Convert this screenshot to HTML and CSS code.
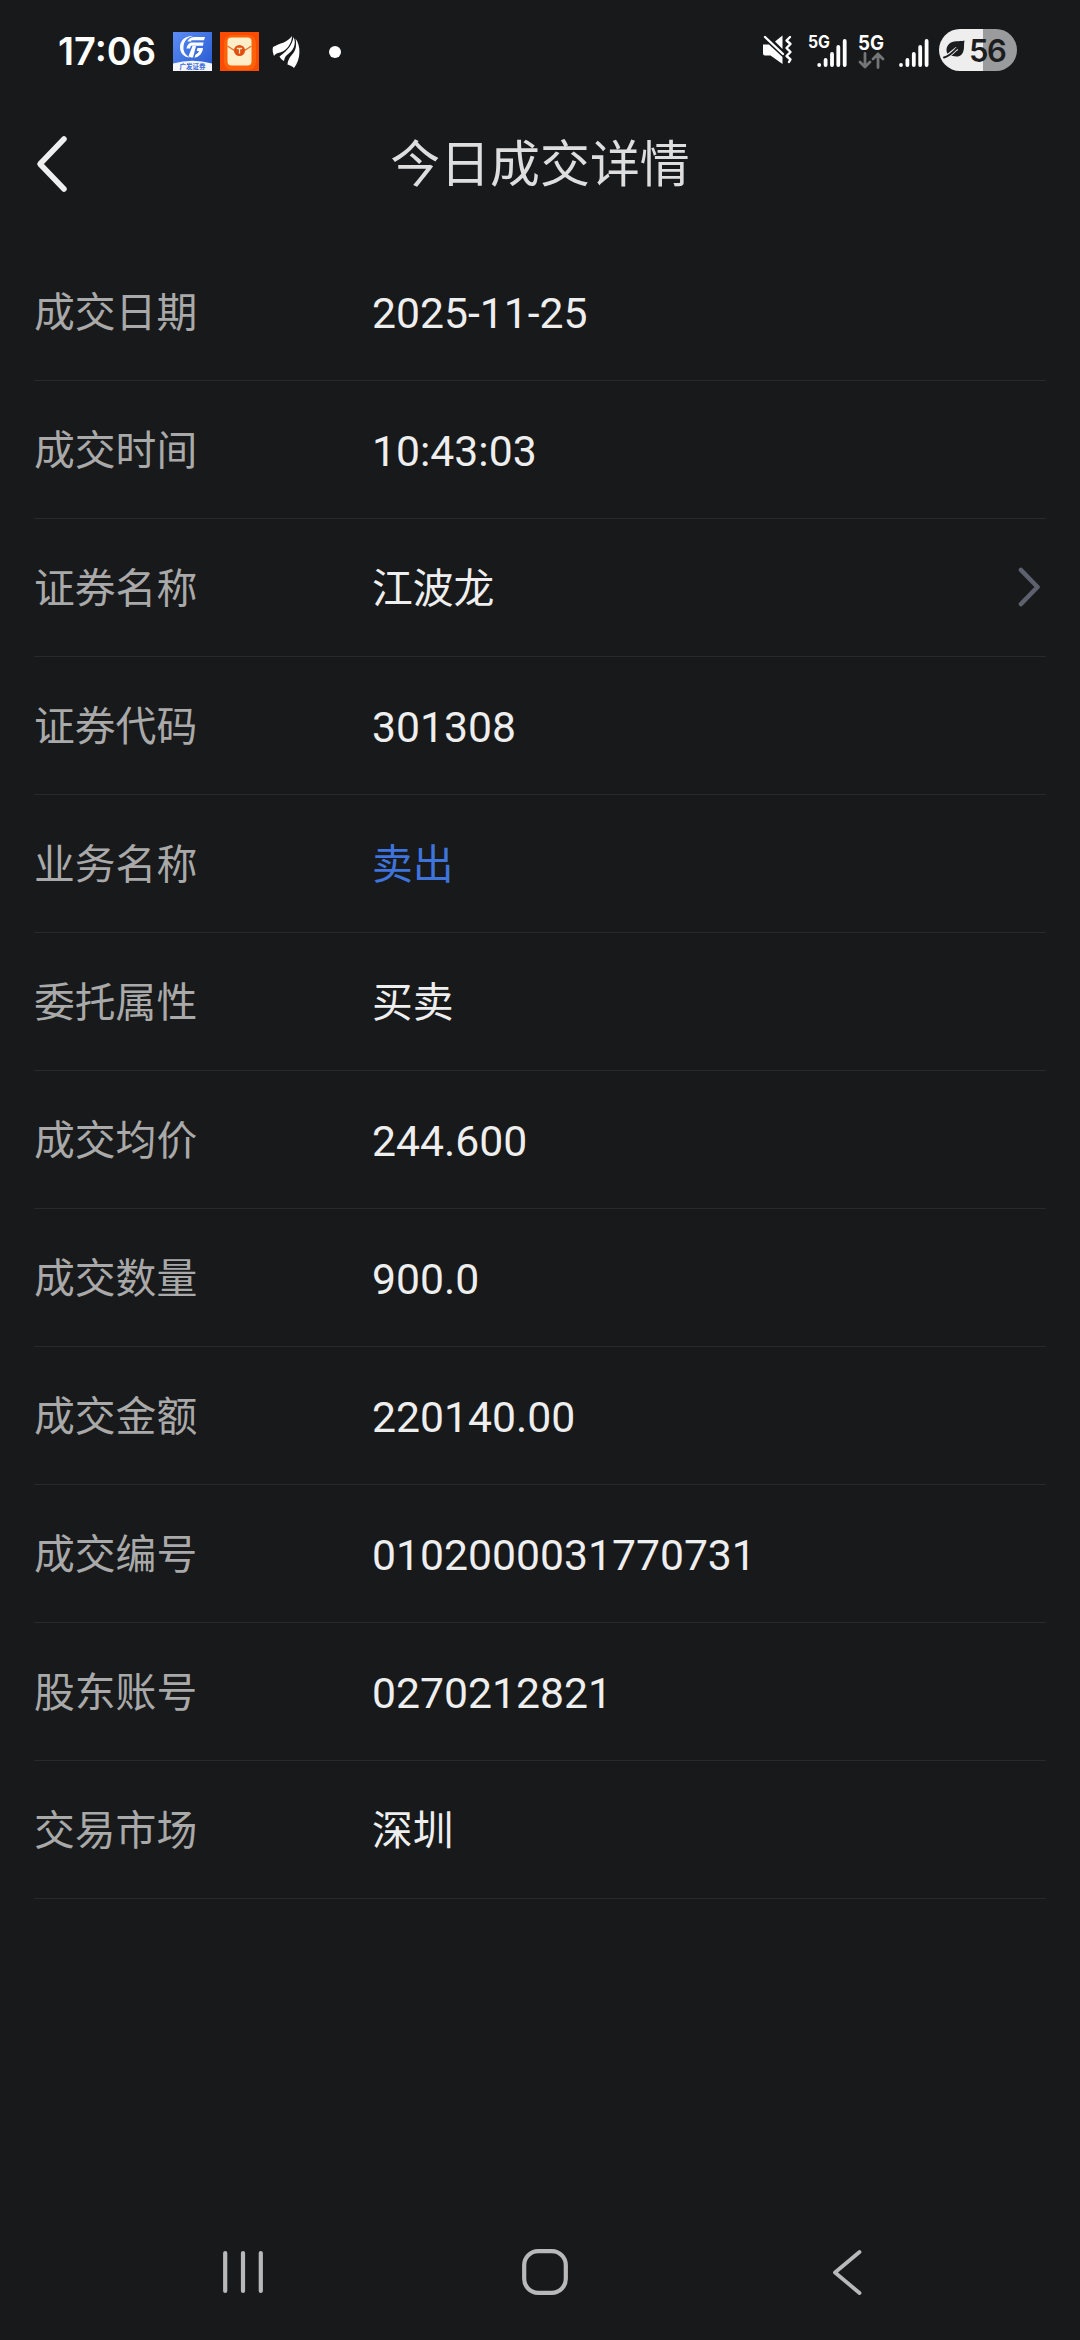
FILE: index.html
```
<!DOCTYPE html>
<html lang="zh-CN">
    <head>
        <meta charset="utf-8">
        <title>今日成交详情</title>
        <link rel="stylesheet" href="styles.css">
    </head>
    <body>
        <div class="status">
            <div class="status_left">
                <span class="time">17:06</span>
                <svg class="app" width="39" height="39" viewBox="0 0 39 39">
                    <defs>
                        <linearGradient id="blue" x1="0" y1="0" x2="1" y2="1">
                            <stop offset="0" stop-color="#5b8cf5"/>
                            <stop offset="1" stop-color="#2558cf"/>
                        </linearGradient>
                    </defs>
                    <rect width="39" height="39" fill="url(#blue)"/>
                    <path d="M0 31.500Q19.500 26 39 31.500V39H0z" fill="#f3f6fd"/>
                    <path d="M20 4C12 3.500 7 9 7 15C7 21 11 25.500 17 25.500C12 23 10 19 10.500 14.500C11 9 14 5.500 20 4z" fill="#fff"/>
                    <path d="M32 5H21C17.500 5.500 15.500 7 14.500 9.500H18L18.500 8.300H31z" fill="#fff"/>
                    <path d="M30.500 10.500H18C15 11.500 14 14 13.500 16.500H17L18 13.800H30z" fill="#fff"/>
                    <path d="M19.500 14H23L20 25.500C18 25.800 16.500 25 15.500 24.300z" fill="#fff"/>
                    <path d="M24.500 16H30C29.500 21.500 26 25 21.500 25.800L22.500 22.500C24.500 21.500 25.500 20.500 26 19H23.700z" fill="#fff"/>
                    <text class="app_name" x="19.500" y="37.200" text-anchor="middle">广发证券</text>
                </svg>
                <svg class="app" width="39" height="39" viewBox="0 0 39 39">
                    <rect width="39" height="39" fill="#fb4c05"/>
                    <rect x="4" y="3" width="32" height="35" rx="8" fill="#ff6208"/>
                    <rect x="7.500" y="5.500" width="24" height="28" rx="4" fill="#ffefc8"/>
                    <path d="M7.500 14L14.500 18.500H24.500L31.500 14" fill="none" stroke="#e0712f" stroke-width="1.300"/>
                    <circle cx="19.500" cy="18.500" r="5.500" fill="#e04e12"/>
                    <path d="M16.800 16.500H22.200M19.500 16.500V21.500" stroke="#ffe5b5" stroke-width="1.300"/>
                </svg>
                <svg class="wing" width="29" height="34" viewBox="0 0 29 34" fill="#fff">
                    <path d="M1 12C8 8 15 8 20 1C20 9 14 16 8 17.500C5 18 3 19 2 21C1 18 0 15 1 12z"/>
                    <path d="M21.500 2C25 9 21 16 15 20C13 21.500 12.500 23.500 12 26C9.500 24.500 8.500 23.500 7.500 21.500C16.500 15 20.500 9 21.500 2z"/>
                    <path d="M23.500 3.500C29 11 29 24 22 33C20 31 18.500 30.500 15.500 29.500C16 24 18.500 21.500 21 18.500C24 15 24.800 9.500 23.500 3.500z"/>
                </svg>
                <span class="dot"></span>
            </div>
            <div class="status_right">
                <svg class="mute" width="31" height="30" viewBox="0 0 31 30">
                    <path d="M1 9.500H7L20.500 22V29L8.500 20.500H3Q1 20.500 1 18.500z" fill="#fff"/>
                    <path d="M13 6.500L20.500 .500V14z" fill="#fff"/>
                    <path d="M3 2L21 19" stroke="#fff" stroke-width="2.400" stroke-linecap="round"/>
                    <path d="M28 2L24.500 5.500L28.500 9L24.500 13L28.500 17L24.500 21L28.500 24.500L27 27" fill="none" stroke="#fff" stroke-width="2.400" stroke-linecap="round" stroke-linejoin="round"/>
                </svg>
                <svg class="net" width="40" height="36" viewBox="0 0 40 36">
                    <text class="net_small" x="0" y="16" textLength="22" lengthAdjust="spacingAndGlyphs">5G</text>
                    <g stroke="#fff" stroke-width="3.800" stroke-linecap="round">
                        <path d="M11.200 32.900V33M17.600 28V33M24 22V33M30.300 15V33M36.700 9V33"/>
                    </g>
                </svg>
                <svg class="data" width="28" height="36" viewBox="0 0 28 36">
                    <text class="net_big" x="0" y="18" textLength="26" lengthAdjust="spacingAndGlyphs">5G</text>
                    <path d="M7 21.500V35M2 30L7 35L12 30M20 35.500V22M15 27L20 22L25 27" fill="none" stroke="#747576" stroke-width="2.800" stroke-linecap="round" stroke-linejoin="round"/>
                </svg>
                <svg class="signal" width="30" height="36" viewBox="0 0 30 36">
                    <path d="M2 32.900V33M8.400 28V33M14.800 22V33M21.200 15V33M27.600 9V33" stroke="#fff" stroke-width="3.800" stroke-linecap="round"/>
                </svg>
                <div class="battery">
                    <svg width="22" height="20" viewBox="0 0 22 20">
                        <path d="M21.500 .500C16 2 10 0 6 4C3 7 3 11 4.500 14C9 15.500 15 19 19 14C22 10 20.500 5 21.500 .500z" fill="#1c1d1e"/>
                        <path d="M14 8.500C9 12 6 16 1.500 17.500" fill="none" stroke="#eee" stroke-width="3.800"/>
                        <path d="M13.500 8.500C9 13 6 16.500 1 17.500" fill="none" stroke="#1c1d1e" stroke-width="1.900" stroke-linecap="round"/>
                    </svg>
                    <span>56</span>
                </div>
            </div>
        </div>
        <div class="header">
            <svg class="back" width="32" height="58" viewBox="0 0 32 58">
                <path d="M28 4L4 29L28 54" fill="none" stroke="#efefef" stroke-width="5.500" stroke-linecap="round" stroke-linejoin="round"/>
            </svg>
            <h1>今日成交详情</h1>
        </div>
        <div class="list">
            <div class="row"><label>成交日期</label><span>2025-11-25</span></div>
            <div class="row"><label>成交时间</label><span>10:43:03</span></div>
            <div class="row">
                <label>证券名称</label><span class="cn">江波龙</span>
                <svg class="more" width="24" height="42" viewBox="0 0 24 42">
                    <path d="M3 4L19.500 21L3 38" fill="none" stroke="#5c616d" stroke-width="4.600" stroke-linecap="round" stroke-linejoin="round"/>
                </svg>
            </div>
            <div class="row"><label>证券代码</label><span>301308</span></div>
            <div class="row"><label>业务名称</label><span class="cn sell">卖出</span></div>
            <div class="row"><label>委托属性</label><span class="cn">买卖</span></div>
            <div class="row"><label>成交均价</label><span>244.600</span></div>
            <div class="row"><label>成交数量</label><span>900.0</span></div>
            <div class="row"><label>成交金额</label><span>220140.00</span></div>
            <div class="row"><label>成交编号</label><span>0102000031770731</span></div>
            <div class="row"><label>股东账号</label><span>0270212821</span></div>
            <div class="row"><label>交易市场</label><span class="cn">深圳</span></div>
        </div>
        <div class="nav">
            <svg width="48" height="48" viewBox="0 0 48 48">
                <path d="M6.200 5V43M24 5V43M41.800 5V43" stroke="#b9b9b9" stroke-width="4.200" stroke-linecap="round"/>
            </svg>
            <svg width="48" height="48" viewBox="0 0 48 48">
                <rect x="3.200" y="3.200" width="41.600" height="41.600" rx="14" fill="none" stroke="#b9b9b9" stroke-width="4.200"/>
            </svg>
            <svg width="48" height="48" viewBox="0 0 48 48">
                <path d="M36.500 4L12 24.500L36.500 45" fill="none" stroke="#b9b9b9" stroke-width="3.800" stroke-linecap="round" stroke-linejoin="round"/>
            </svg>
        </div>
    </body>
</html>
```

FILE: styles.css
```
*{
    box-sizing: border-box;
}
body{
    margin: 0;
    height: 2340px;
    display: flex;
    flex-direction: column;
    background: #18191b;
    font-family: Roboto, "Noto Sans CJK SC", sans-serif;
    color: #eee;
    overflow: hidden;
}
.status{
    height: 103px;
    display: flex;
    justify-content: space-between;
    padding: 0 63px 0 58px;
    color: #fff;
}
.status_left,
.status_right{
    display: flex;
    align-items: center;
}
.time{
    width: 115px;
    font-family: Inter, sans-serif;
    font-size: 38px;
    font-weight: 600;
    line-height: 44px;
    padding-bottom: 2px;
}
.app{
    margin-right: 8px;
}
.app_name{
    font-family: "Noto Sans CJK SC", sans-serif;
    font-size: 6.5px;
    font-weight: 700;
    fill: #3d6bd6;
}
.wing{
    margin-left: 5px;
}
.dot{
    width: 12px;
    height: 12px;
    margin-left: 28px;
    border-radius: 50%;
    background: #fff;
}
.status_right{
    padding-bottom: 3px;
}
.mute{
    margin-right: 15px;
}
.net{
    margin-right: 10px;
}
.data{
    margin-right: 13px;
}
.signal{
    margin-right: 10px;
}
.net,
.signal,
.data{
    overflow: visible;
}
.net_small,
.net_big{
    font-family: Inter, sans-serif;
    font-weight: 700;
    fill: #fff;
}
.net_small{
    font-size: 17px;
}
.net_big{
    font-size: 20px;
}
.battery{
    width: 78px;
    height: 42px;
    display: flex;
    align-items: center;
    padding-left: 4px;
    border-radius: 21px;
    background: linear-gradient(to right, #eee 44px, #9a9b9c 44px);
}
.battery span{
    margin-left: 4px;
    font-family: Inter, sans-serif;
    font-size: 31px;
    font-weight: 600;
    letter-spacing: -1.5px;
    color: #1c1d1e;
}
.header{
    height: 140px;
    display: grid;
    grid-template-columns: 80px 1fr 80px;
    align-items: center;
    padding-bottom: 16px;
}
.back{
    margin-left: 36px;
    margin-bottom: 2px;
}
.header h1{
    margin: 0;
    text-align: center;
    font-size: 49.9px;
    font-weight: 400;
    line-height: 60px;
    color: #dedede;
}
.list{
    flex: 1;
    padding: 0 34px;
}
.row{
    height: 138px;
    display: flex;
    align-items: center;
    padding-top: 3px;
    border-bottom: 1px solid #28292b;
}
.row label{
    width: 338px;
    font-size: 40.8px;
    line-height: 50px;
    color: #a9a9a9;
}
.row span{
    flex: 1;
    font-size: 42.7px;
    line-height: 50px;
}
.row .cn{
    font-size: 40.8px;
}
.row .sell{
    color: #3f74dc;
}
.more{
    margin-right: 4px;
    margin-bottom: 5px;
}
.nav{
    height: 136px;
    display: flex;
    justify-content: center;
    align-items: center;
    gap: 254px;
    padding: 0 0 0 10px;
}
```
